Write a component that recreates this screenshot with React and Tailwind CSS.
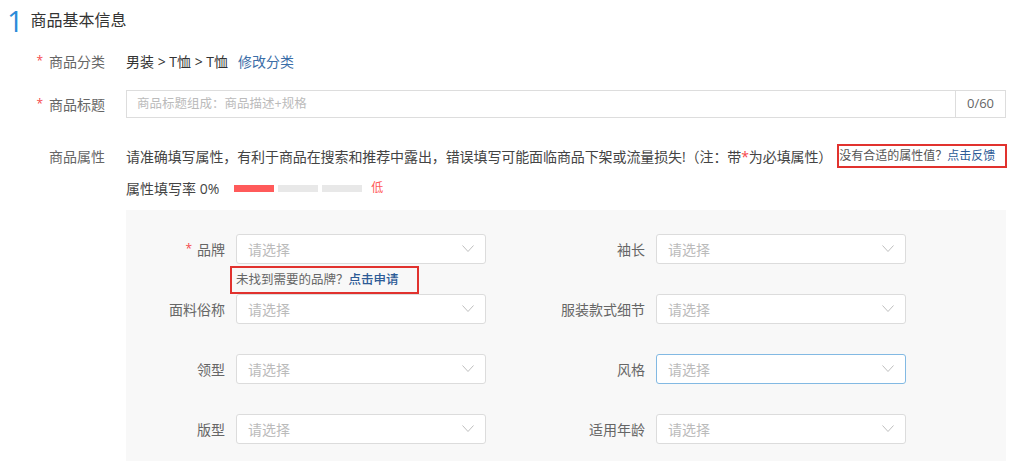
import React from "react";

const FONT = {
    fontFamily:
        '"Open Sans", "Noto Sans CJK SC", "Liberation Sans", sans-serif',
};

const Chevron = () => (
    <svg width="12" height="8" viewBox="0 0 12 8" className="shrink-0">
        <polyline
            points="0.5,0.5 6,6.5 11.5,0.5"
            fill="none"
            stroke="#bfbfbf"
            strokeWidth="1"
        />
    </svg>
);

const Select = ({ focused }) => (
    <div
        className={`flex items-center justify-between w-[250px] h-[30px] bg-white rounded-[3px] border pl-[11px] pr-[11px] ${
            focused ? "border-[#82b9e3]" : "border-[#dcdcdc]"
        }`}>
        <span className="text-[14px] text-[#bbbbbb]">请选择</span>
        <Chevron />
    </div>
);

const Field = ({ label, required, focused, hint }) => (
    <div className="flex items-start h-[60px]">
        <div className="w-[110px] h-[30px] pr-[11px] flex items-center justify-end text-[14px] text-[#666]">
            {required && <span className="text-[#f5484c] mr-[5px] text-[12px]">*</span>}
            {label}
        </div>
        <div className="flex flex-col">
            <Select focused={focused} />
            {hint && (
                <div className="mt-[2px] -ml-[6px] h-[28px] w-[189px] border-2 border-[#e1322e] flex items-center pl-[4px] text-[12.5px] text-[#666] whitespace-nowrap">
                    未找到需要的品牌？
                    <span className="text-[#2d5b96] font-medium">点击申请</span>
                </div>
            )}
        </div>
    </div>
);

const Label = ({ children, required }) => (
    <div className="w-[126px] shrink-0 pr-[21px] flex items-center justify-end text-[14px] text-[#666]">
        {required && <span className="text-[#f5484c] mr-[6px] text-[12px]">*</span>}
        {children}
    </div>
);

export default function App() {
    const fields = [
        { label: "品牌", required: true, hint: true },
        { label: "袖长" },
        { label: "面料俗称" },
        { label: "服装款式细节" },
        { label: "领型" },
        { label: "风格", focused: true },
        { label: "版型" },
        { label: "适用年龄" },
    ];

    return (
        <div className="w-[1019px] h-[461px] bg-white overflow-hidden text-[#333]" style={FONT}>
            {/* Header */}
            <div className="flex items-center h-[40px] pl-[7px]">
                <span className="text-[29px] leading-none text-[#2b8bd9]">1</span>
                <span className="ml-[7px] text-[16px] text-[#333]">商品基本信息</span>
            </div>

            {/* Category */}
            <div className="flex items-center h-[30px] mt-[6px]">
                <Label required>商品分类</Label>
                <span className="text-[14px] text-[#333]">男装 &gt; T恤 &gt; T恤</span>
                <span className="ml-[10px] text-[14px] text-[#3b6ea8]">修改分类</span>
            </div>

            {/* Title */}
            <div className="flex items-stretch h-[28px] mt-[14px]">
                <Label required>商品标题</Label>
                <div className="flex w-[880px] border border-[#dddddd] bg-white">
                    <div className="flex-1 flex items-center pl-[10px] text-[12.5px] text-[#bbbbbb]">
                        商品标题组成：商品描述+规格
                    </div>
                    <div className="w-[50px] border-l border-[#dddddd] flex items-center justify-center text-[13px] text-[#666]">
                        0/60
                    </div>
                </div>
            </div>

            {/* Attributes */}
            <div className="flex items-center h-[24px] mt-[26px]">
                <Label>商品属性</Label>
                <span className="text-[14px] text-[#444] whitespace-nowrap tracking-[-0.1px]">
                    请准确填写属性，有利于商品在搜索和推荐中露出，错误填写可能面临商品下架或流量损失!（注：带
                    <span className="text-[#f5484c]">*</span>为必填属性）
                </span>
                <span className="ml-[5px] h-[24px] w-[170px] border-2 border-[#e1322e] flex items-center whitespace-nowrap text-[12px] text-[#555]">
                    没有合适的属性值？
                    <span className="text-[#2d5b96]">点击反馈</span>
                </span>
            </div>

            {/* Fill rate */}
            <div className="flex items-center h-[20px] mt-[10px] pl-[126px]">
                <span className="text-[14px] text-[#444]">属性填写率 0%</span>
                <div className="flex gap-[4px] ml-[15px]">
                    <div className="w-[40px] h-[7px] bg-[#ff5a5a]" />
                    <div className="w-[40px] h-[7px] bg-[#e8e8e8]" />
                    <div className="w-[40px] h-[7px] bg-[#e8e8e8]" />
                </div>
                <span className="ml-[9px] text-[12px] text-[#ff5a5a]">低</span>
            </div>

            {/* Attribute panel */}
            <div className="ml-[126px] mr-[13px] mt-[12px] bg-[#f8f8f8] pt-[24px] h-[260px]">
                <div className="grid grid-cols-[420px_420px]">
                    {fields.map((f) => (
                        <Field key={f.label} {...f} />
                    ))}
                </div>
            </div>
        </div>
    );
}
